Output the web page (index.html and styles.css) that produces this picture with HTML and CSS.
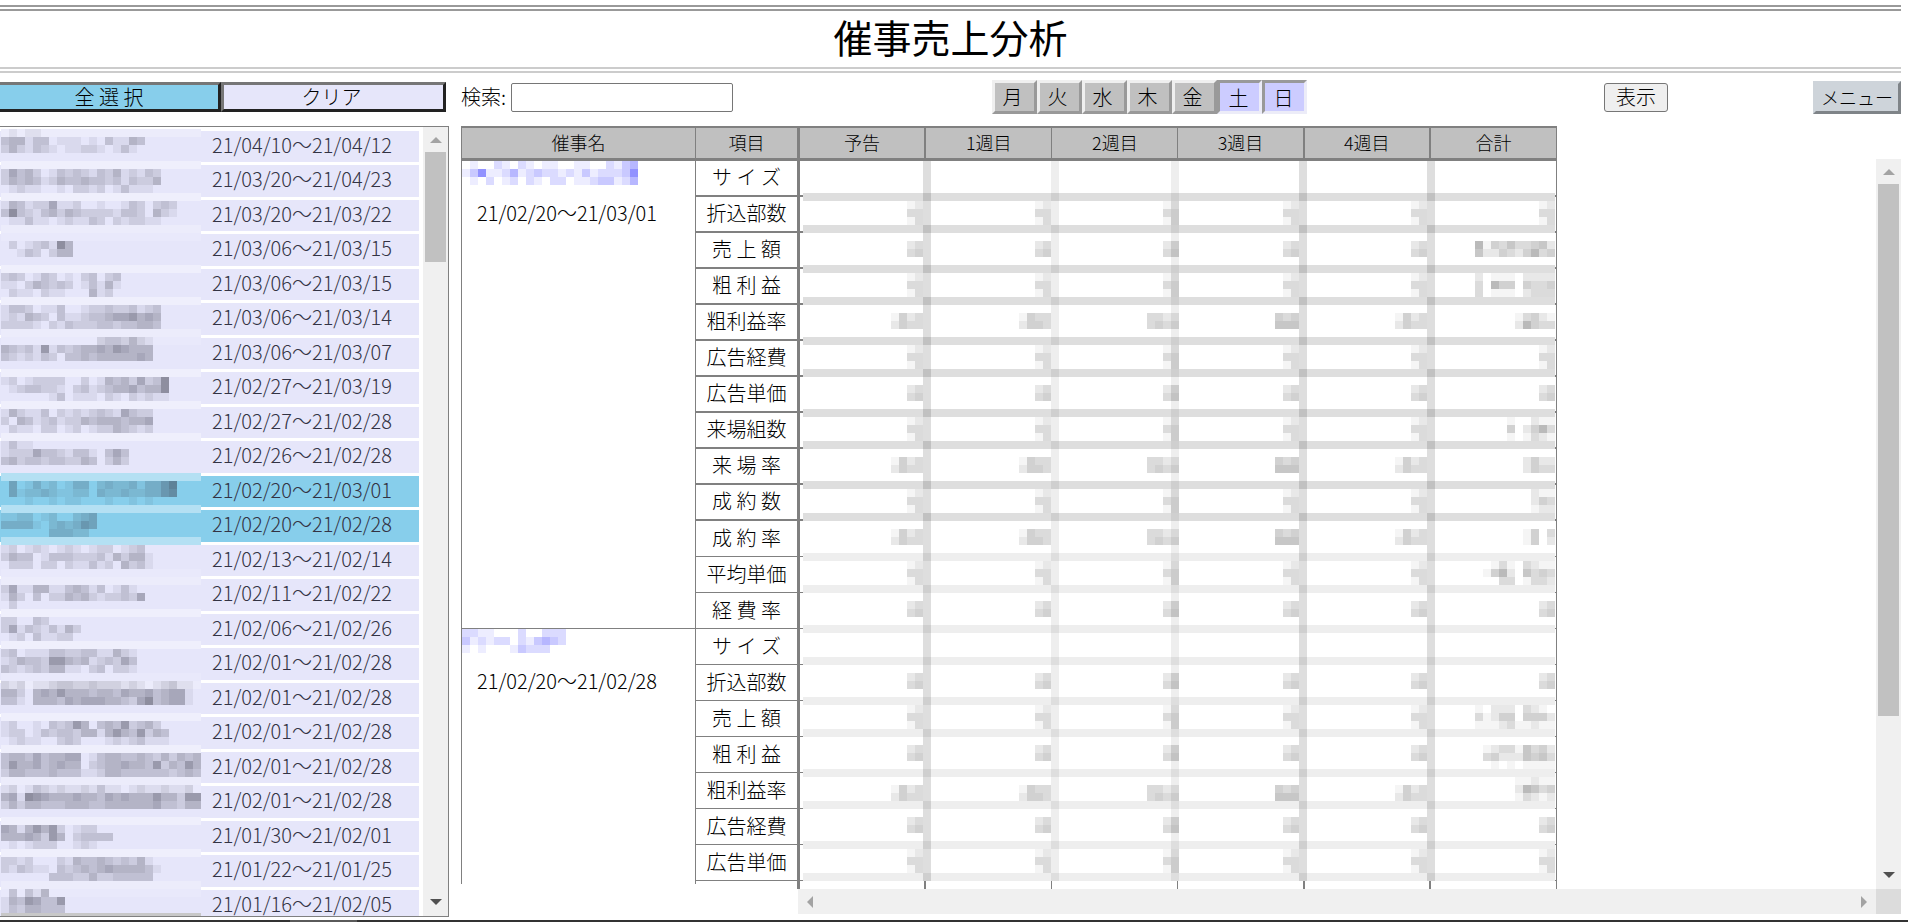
FILE: index.html
```html
<!DOCTYPE html>
<html lang="ja">
<head>
<meta charset="utf-8">
<title>催事売上分析</title>
<link rel="stylesheet" href="styles.css">
</head>
<body>
<header class="page-header"><h1>催事売上分析</h1></header>

<form class="toolbar" onsubmit="return false">
  <div class="select-buttons">
    <button type="button" class="btn-select btn-all">全 選 択</button>
    <button type="button" class="btn-select btn-clear">クリア</button>
  </div>
  <div class="search">
    <label for="q">検索:</label>
    <input id="q" type="text">
  </div>
  <div class="days">
    <button type="button">月</button>
    <button type="button">火</button>
    <button type="button">水</button>
    <button type="button">木</button>
    <button type="button">金</button>
    <button type="button" class="on" aria-pressed="true">土</button>
    <button type="button" class="on" aria-pressed="true">日</button>
  </div>
  <button type="button" class="btn-show">表示</button>
  <button type="button" class="btn-menu">メニュー</button>
</form>

<main class="content">
  <section class="event-list" aria-label="催事一覧">
    <div class="list-view">
      <table class="list-table"><tbody id="events"></tbody></table>
      <svg id="list-mask" class="list-mask" width="200" height="792" shape-rendering="crispEdges" aria-hidden="true"></svg>
    </div>
    <div class="scroll-v list-scroll" aria-hidden="true">
      <i class="arrow up"></i><span class="thumb"></span><i class="arrow down"></i>
    </div>
  </section>

  <section class="report" aria-label="分析表">
    <div class="names-pane">
      <table class="names-table">
        <colgroup><col class="c-name"><col class="c-item"></colgroup>
        <thead><tr><th scope="col">催事名</th><th scope="col">項目</th></tr></thead>
        <tbody id="names"></tbody>
      </table>
    </div>
    <div class="data-pane">
      <table class="data-table">
        <thead><tr><th scope="col">予告</th><th scope="col">1週目</th><th scope="col">2週目</th><th scope="col">3週目</th><th scope="col">4週目</th><th scope="col">合計</th></tr></thead>
        <tbody id="data"></tbody>
      </table>
      <svg id="data-mask" class="data-mask" width="752" height="720" viewBox="0 -32 752 720" shape-rendering="crispEdges" aria-hidden="true"></svg>
    </div>
    <div class="scroll-v report-scroll" aria-hidden="true">
      <i class="arrow up"></i><span class="thumb"></span><i class="arrow down"></i>
    </div>
    <div class="scroll-h" aria-hidden="true"><i class="arrow left"></i><i class="arrow right"></i></div>
    <div class="scroll-corner"></div>
  </section>
</main>
<footer class="bottom-strip"><span></span></footer>
<script src="app.js"></script>
</body>
</html>
```

FILE: styles.css
```css
* { box-sizing: border-box; }

body {
  margin: 0;
  height: 100vh;
  overflow: hidden;
  display: flex;
  flex-direction: column;
  background: #fff;
  color: #000;
  font-family: "Noto Sans CJK JP", sans-serif;
  font-size: 20px;
  font-weight: 300;
  line-height: 24px;
}

button, input {
  font: inherit;
  color: inherit;
  margin: 0;
  padding: 0;
}

.page-header {
  margin: 5px 13px 0 0;
  border-top: 6px double #999;
  border-bottom: 6px double #ccc;
}

.page-header h1 {
  margin: 0;
  padding-bottom: 6px;
  font-size: 39px;
  font-weight: 400;
  line-height: 50px;
  text-align: center;
}

/* Toolbar */
.toolbar {
  display: flex;
  align-items: center;
  padding: 7px 13px 12px 0;
}

.select-buttons { display: flex; width: 446px; }

.btn-select {
  height: 30px;
  border: 3px solid;
  border-color: #767676 #222 #222 #767676;
  line-height: 22px;
}

.btn-all { width: 221px; border-left: 0; background: #87ceeb; }
.btn-clear { flex: 1; background: #e6e6fa; padding-right: 4px; }

.search { display: flex; align-items: center; margin-left: 15px; }
.search label { width: 50px; }

.search input {
  width: 222px;
  height: 29px;
  border: 1px solid #767676;
  border-radius: 2px;
}

.days { display: flex; margin-left: 259px; }

.days button {
  width: 45px;
  height: 34px;
  padding-right: 4px;
  border: 3px solid;
  border-color: #efefef #999 #999 #efefef;
  background: #c0c0c0;
}

.days .on {
  padding: 1px 2px 0 0;
  border-color: #999 #ececf8 #ececf8 #999;
  background: #ccf;
}

.btn-show {
  width: 64px;
  height: 29px;
  margin-left: 297px;
  border: 1px solid #767676;
  border-radius: 3px;
  background: #efefef;
}

.btn-menu {
  width: 88px;
  height: 33px;
  margin-left: auto;
  border: 3px solid;
  border-color: #ced4da #7f8488 #7f8488 #ced4da;
  background: #ced4da;
  font-size: 18px;
}

.content {
  flex: 1;
  min-height: 0;
  display: flex;
  gap: 12px;
  padding: 0 13px 0 0;
}

/* Event list */
.event-list {
  display: flex;
  width: 449px;
  margin-bottom: 3px;
  border: 1px solid #808080;
  border-left: 0;
}

.list-view {
  position: relative;
  flex: 1;
  overflow: hidden;
  padding: 1px 4px 0 0;
}

.list-table {
  width: 100%;
  border-spacing: 0 3px;
  color: #334;
}

.list-table td {
  height: 31px;
  padding: 0 0 4px;
  background: #e6e6fa;
  line-height: 24px;
  white-space: nowrap;
}

.list-table tr:nth-child(even) td { height: 32px; }
.list-table td:first-child { width: 201px; }
.list-table td:last-child { padding-left: 11px; }
.list-table .selected td { background: #87ceeb; }

.list-mask { position: absolute; left: 1px; top: 2px; }

/* Scroll bars */
.scroll-v {
  display: flex;
  flex-direction: column;
  align-items: center;
  width: 25px;
  padding: 10px 0 11px;
  background: #f0f0f0;
}

.thumb { width: 21px; margin-top: 9px; background: #c1c1c1; }
.list-scroll .thumb { height: 110px; }
.report-scroll .thumb { height: 75%; }

.arrow { width: 0; height: 0; border: 0 solid transparent; }
.arrow.up { border-width: 0 6px 6px; border-bottom-color: #a3a3a3; }
.arrow.down { border-width: 6px 6px 0; border-top-color: #505050; margin-top: auto; }
.arrow.left { border-width: 6px 6px 6px 0; border-right-color: #a3a3a3; }
.arrow.right { border-width: 6px 0 6px 6px; border-left-color: #a3a3a3; }

/* Report */
.report {
  flex: 1;
  min-width: 0;
  display: grid;
  grid-template-columns: 336px 1fr 25px;
  grid-template-rows: 1fr 25px;
  padding-bottom: 6px;
}

.names-pane { overflow: hidden; min-height: 0; margin-bottom: 5px; }
.data-pane { position: relative; overflow: hidden; min-height: 0; }

.names-table, .data-table {
  table-layout: fixed;
  border-spacing: 0;
}

.names-table { width: 336px; border-left: 1px solid #808080; }
.data-table { width: 760px; border-left: 3px solid #808080; }
.c-name { width: 234px; }

.report th, .report td { padding: 0 0 2px; border: 0 solid #808080; }

.report thead th {
  height: 35px;
  border-width: 2px 1px 3px 0;
  background: #c0c0c0;
  font-size: 18px;
  font-weight: 300;
}

.report tbody td, .report tbody th {
  height: 36px;
  border-width: 0 1px 2px 0;
  font-weight: 300;
  text-align: center;
}

.report tbody .thin > * { border-bottom-width: 1px; }
.names-table tr > :last-child { border-right-width: 0 !important; }

.report .event-cell {
  border-bottom-width: 1px !important;
  vertical-align: top;
  text-align: left;
}

.event-cell a { display: block; height: 40px; }
.event-cell svg { display: block; }
.event-cell span { display: block; padding-left: 15px; }

.data-table th:nth-child(1), .data-table td:nth-child(1),
.data-table th:nth-child(4), .data-table td:nth-child(4),
.data-table th:nth-child(5), .data-table td:nth-child(5) { border-right-width: 2px !important; }

.data-mask { position: absolute; left: 6px; top: 35px; }

.report-scroll { margin-top: 33px; }

.scroll-h {
  grid-column: 2;
  display: flex;
  justify-content: space-between;
  align-items: center;
  margin-left: 1px;
  padding: 0 9px;
  background: #f0f0f0;
}

.scroll-corner { background: #dcdcdc; }

.bottom-strip { height: 2px; margin-right: 6px; background: #333; }
.bottom-strip span { display: block; width: 67px; height: 2px; margin-left: 290px; background: #5a5a5a; }
```

FILE: app.js
```js
const CELL = 8;
const byId = (id) => document.getElementById(id);

function block(svg, col, row, fill, cols = 1, rows = 1) {
  const r = document.createElementNS('http://www.w3.org/2000/svg', 'rect');
  r.setAttribute('x', col * CELL);
  r.setAttribute('y', row * CELL);
  r.setAttribute('width', cols * CELL);
  r.setAttribute('height', rows * CELL);
  r.setAttribute('fill', fill);
  svg.appendChild(r);
}

/* Each digit of a line is the strength of one mosaic cell. */
function paint(svg, col, row, lines, rgb, step) {
  lines.forEach((line, y) => [...line].forEach((d, x) => {
    if (d > 0) block(svg, col + x, row + y, `rgba(${rgb},${(d * step).toFixed(2)})`);
  }));
}

/* period, first mosaic row, mosaic lines */
const events = [
  ['21/04/10～21/04/12', 0, ['0101100000000000', '344133011101031143', '242132101122101310']],
  ['21/03/20～21/04/23', 5, ['25342013232132412132', '24343124334332313224', '01211001022120131110']],
  ['21/03/20～21/03/22', 9, ['14312251120010013202320', '37321342432222133204210', '01131101211320212211000']],
  ['21/03/06～21/03/15', 14, ['020123174', '001320244']],
  ['21/03/06～21/03/15', 18, ['232013201023023', '110243232013141', '021102110004120']],
  ['21/03/06～21/03/14', 22, ['13320113001223223123', '12143203112334556454', '22221021322233233443']],
  ['21/03/06～21/03/07', 26, ['0000000000002332421', '4323161323445465444', '3212132033434444454']],
  ['21/02/27～21/03/19', 31, ['120122220020143425237', '012332210231234453447', '000000130111021021211']],
  ['21/02/27～21/02/28', 35, ['1421130212123215322', '2043123122434443445', '0211022012012243212']],
  ['21/02/26～21/02/28', 39, ['1311000000000000', '1222533213310353', '3423323322430242']],
  ['21/02/20～21/03/01', 44, ['0401312013302322313357', '0412232112203223223356', '0001001011000100101000']],
  ['21/02/20～21/02/28', 48, ['112201200234', '333310232354', '000000333220']],
  ['21/02/13～21/02/14', 52, ['1201210121012201230', '2433013332223142441', '0222022021131204231']],
  ['21/02/11～21/02/22', 57, ['251144113431301310', '142030224342122325', '020000000000000000']],
  ['21/02/06～21/02/26', 61, ['2200320000', '2513213142', '0120311220']],
  ['21/02/01～21/02/28', 65, ['23011133223311421', '12433266434123253', '32123244110230221']],
  ['21/02/01～21/02/28', 69, ['212011233223222121012311', '442045464443443544534551', '331044435455544325734551']],
  ['21/02/01～21/02/28', 74, ['120010323640343623420', '122013233244146436243', '012110023200012123111']],
  ['21/02/01～21/02/28', 78, ['3443534455013443343242434', '3644534544023445443624364', '2443334333112443333332343']],
  ['21/02/01～21/02/28', 82, ['1201321211213110121121120', '4517654445443545444644266', '2424433344433444444533244']],
  ['21/01/30～21/02/01', 87, ['54146462012200', '44454264023333', '01012220012100']],
  ['21/01/22～21/01/25', 91, ['22120002143343232410', '21321103234345444431', '00000033322422333330']],
  ['21/01/16～21/02/05', 95, ['03031400', '14365336', '13244333']],
];
const isSelected = (i) => i === 10 || i === 11;

byId('events').innerHTML = events.map(([period], i) =>
  `<tr${isSelected(i) ? ' class="selected"' : ''}><td></td><td>${period}</td></tr>`).join('');

/* Background of the mosaic averages the row colours and the gaps under each band. */
const listMask = byId('list-mask');
const colourAt = (y) => {
  for (let i = 0; i < events.length; i++) {
    const top = 2 + 34 * i + Math.floor(i / 2);
    if (y >= top && y < top + 31 + i % 2) return isSelected(i) ? [135, 206, 235] : [230, 230, 250];
  }
  return [255, 255, 255];
};
for (let row = 0; row < 98; row++) {
  const sum = [0, 0, 0];
  for (let k = 0; k < CELL; k++) colourAt(row * CELL + k).forEach((v, c) => { sum[c] += v; });
  block(listMask, 0, row, `rgb(${sum.map((v) => Math.round(v / CELL))})`, 25);
}
block(listMask, 0, 98, '#c8c8c8', 25);
events.forEach(([, row, lines]) => paint(listMask, 0, row, lines, '50,50,65', 0.07));

/* Report tables */
const items = ['サ イ ズ', '折込部数', '売 上 額', '粗 利 益', '粗利益率', '広告経費', '広告単価',
  '来場組数', '来 場 率', '成 約 数', '成 約 率', '平均単価', '経 費 率'];
const groups = [
  { period: '21/02/20～21/03/01', key: 'a', rows: items },
  { period: '21/02/20～21/02/28', key: 'b', rows: [...items.slice(0, 7), ''] },
];
let names = '';
let data = '';
groups.forEach(({ period, key, rows }, g) => rows.forEach((item, i) => {
  const cls = g || i > 9 ? ' class="thin"' : '';
  const event = i ? '' : `<td class="event-cell" rowspan="${rows.length}"><a href="#" aria-label="${period}"><svg id="name-${key}" width="184" height="24" shape-rendering="crispEdges"></svg></a><span>${period}</span></td>`;
  names += `<tr${cls}>${event}<th scope="row">${item}</th></tr>`;
  data += `<tr${cls}>${'<td></td>'.repeat(6)}</tr>`;
}));
byId('names').innerHTML = names;
byId('data').innerHTML = data;

paint(byId('name-a'), 0, 0, ['0100210210110011002134', '1361124123221213122236', '0102012021022011233124'], '90,90,255', 0.11);
paint(byId('name-b'), 0, 0, ['2211000200222', '3121220213432', '1010001322200'], '90,90,255', 0.11);

/* Blurred rules and figures of the data table */
const mask = byId('data-mask');
const rules = [0, 4, 9, 13, 18, 22, 27, 31, 36, 40, 45, 49, 54, 58, 63, 67, 72, 76, 81, 85];
block(mask, 0, -4, '#fff', 94, 90);
const shade = (a) => `rgba(0,0,0,${a})`;
rules.forEach((row, i) => block(mask, 0, row, shade(i < 10 ? 0.13 : 0.066), 94));
[[15, 0.13], [31, 0.066], [46, 0.066], [62, 0.13], [78, 0.13]].forEach(([col, a]) => {
  block(mask, col, -4, shade(a), 1, 90);
});

const ends = [15, 31, 47, 62, 78, 94];
const totals = {
  2: ['6143533452', '5224324634'],
  3: ['2011102222', '3064404334', '3011102333'],
  4: ['13421', '26433'],
  7: ['100211', '402463', '101321'],
  8: ['2422', '2433'],
  9: ['211', '243', '122'],
  10: ['1403', '1402'],
  11: ['013103211', '146205343', '003301332'],
  15: ['1022203210', '3124404442', '1112311211'],
  16: ['123315342', '342225453', '010101111'],
  17: ['11211', '26534', '13212'],
};
rules.forEach((rule, i) => {
  const r = i + 1;
  if (r === 13 || r === 20) return;
  const tall = rules[i + 1] - rule === 4;
  const rate = [4, 8, 10, 17].includes(r);
  ends.forEach((end, c) => {
    let lines = tall ? ['12', '33', '13'] : ['23', '34'];
    if (rate) {
      lines = [['1423', '2433'], ['1433', '2443'], ['3322', '3433'], ['434', '555'], ['1423', '2433'], ['2422', '2433']][c];
      if (tall) lines = ['0'.repeat(lines[0].length), ...lines];
    }
    if (c === 5 && totals[r]) lines = totals[r];
    paint(mask, end - lines[0].length, tall ? rule + 1 : rule + 2, lines, '0,0,0', 0.045);
  });
});
```
